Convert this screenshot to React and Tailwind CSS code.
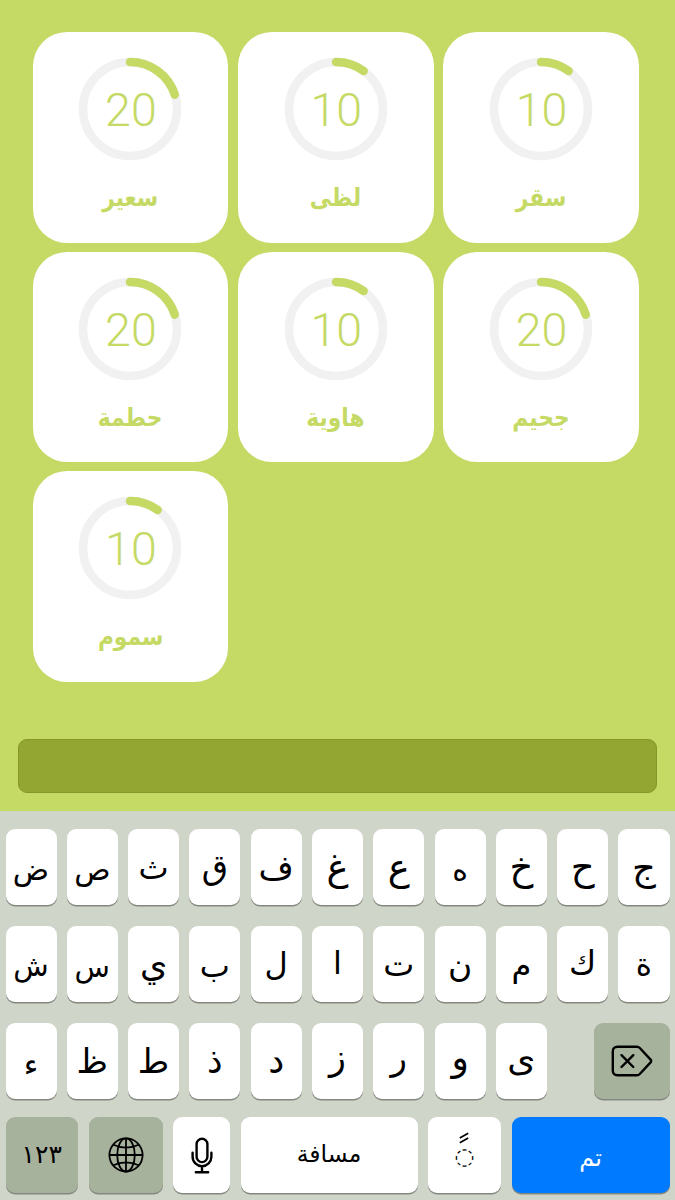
import React from 'react';

const cards = [
  { name: 'سعير', value: 20 },
  { name: 'لظى', value: 10 },
  { name: 'سقر', value: 10 },
  { name: 'حطمة', value: 20 },
  { name: 'هاوية', value: 10 },
  { name: 'جحيم', value: 20 },
  { name: 'سموم', value: 10 },
];

const rows = [
  [
    ['ض', 'text-[30px] pt-1.5'],
    ['ص', 'text-[30px] pt-1.5'],
    ['ث', 'text-[32px] pt-0.5'],
    ['ق', 'text-[34px]'],
    ['ف', 'text-[34px]'],
    ['غ', 'text-[37px]'],
    ['ع', 'text-[37px]'],
    ['ه', 'text-[30px] pt-1.5'],
    ['خ', 'text-[37px]'],
    ['ح', 'text-[37px]'],
    ['ج', 'text-[37px]'],
  ],
  [
    ['ش', 'text-[29px] pt-1'],
    ['س', 'text-[29px] pt-1.5'],
    ['ي', 'text-[35px]'],
    ['ب', 'text-[32px] pt-1'],
    ['ل', 'text-[32px]'],
    ['ا', 'text-[32px] pb-0.5'],
    ['ت', 'text-[33px]'],
    ['ن', 'text-[33px] pt-0.5'],
    ['م', 'text-[32px] pt-0.5'],
    ['ك', 'text-[33px] pb-1'],
    ['ة', 'text-[31px]'],
  ],
  [
    ['ء', 'text-[31px] pt-1.5'],
    ['ظ', 'text-[34px]'],
    ['ط', 'text-[34px]'],
    ['ذ', 'text-[35px]'],
    ['د', 'text-[36px]'],
    ['ز', 'text-[35px] pb-2'],
    ['ر', 'text-[34px] pb-1.5'],
    ['و', 'text-[36px] pb-1.5'],
    ['ى', 'text-[36px] pb-1'],
  ],
];

const RADIUS = 47;
const CIRCUMFERENCE = 2 * Math.PI * RADIUS;

const Card = ({ name, value }) => (
  <div className="h-[210.5px] rounded-[34px] bg-white flex flex-col items-center pt-[25px]">
    <div className="grid place-items-center">
      <svg viewBox="0 0 104 104" className="w-[104px] h-[104px] col-start-1 row-start-1" fill="none">
        <circle cx="52" cy="52" r={RADIUS} stroke="#f1f1f1" strokeWidth="8.5" />
        <circle
          cx="52"
          cy="52"
          r={RADIUS}
          stroke="#c5d965"
          strokeWidth="8.5"
          strokeLinecap="round"
          strokeDasharray={`${(CIRCUMFERENCE * value) / 100} ${CIRCUMFERENCE}`}
          transform="rotate(-90 52 52)"
        />
      </svg>
      <span className="col-start-1 row-start-1 font-['Roboto',sans-serif] font-light text-[46.5px] leading-none text-[#c5d965] pt-[3px] pl-px">
        {value}
      </span>
    </div>
    <p dir="rtl" className="mt-[19px] font-['DejaVu_Sans',sans-serif] font-bold text-[25px] leading-9 text-[#c5d965] scale-x-[0.87]">
      {name}
    </p>
  </div>
);

const Key = ({ children, className = 'bg-white text-black' }) => (
  <div className={`h-[76px] rounded-[9px] shadow-[0_1.5px_0_#85887f] flex items-center justify-center ${className}`}>
    {children}
  </div>
);

const BackspaceIcon = () => (
  <svg viewBox="0 0 42 32" className="w-[42px] h-8" fill="none" stroke="currentColor" strokeWidth="2.4" strokeLinejoin="round" strokeLinecap="round">
    <path d="M6.5 1.8H26Q27.6 1.8 28.8 3L39.6 14.6Q40.7 16 39.6 17.4L28.8 29Q27.6 30.2 26 30.2H6.5Q1.8 30.2 1.8 25.5V6.5Q1.8 1.8 6.5 1.8Z" />
    <path d="M10.5 10.2L22.3 22M22.3 10.2L10.5 22" />
  </svg>
);

const GlobeIcon = () => (
  <svg viewBox="0 0 36 36" className="w-9 h-9" fill="none" stroke="currentColor" strokeWidth="1.8">
    <circle cx="18" cy="18" r="16.6" />
    <ellipse cx="18" cy="18" rx="8.8" ry="16.6" />
    <path d="M18 1.2V34.8M1.2 18H34.8M5.2 7.8Q18 13.5 30.8 7.8M5.2 28.2Q18 22.5 30.8 28.2" />
  </svg>
);

const MicIcon = () => (
  <svg viewBox="0 0 22 37" className="w-[22px] h-[37px] mt-0.5" fill="none" stroke="currentColor" strokeWidth="2.4" strokeLinecap="round">
    <rect x="5.6" y="1.7" width="10.8" height="23.4" rx="5.4" />
    <path d="M1.6 15.8V19.8A9.4 9.4 0 0 0 20.4 19.8V15.8M11 29.4V35.3M4.8 35.3H17.2" />
  </svg>
);

const Keyboard = () => (
  <div className="h-[389px] bg-[#cfd5c9] px-[5.5px] pt-[18px] font-['DejaVu_Sans',sans-serif]">
    <div className="flex flex-col gap-[21.2px]">
      {rows.map((row, i) => (
        <div key={i} className="grid grid-cols-11 gap-x-[10.3px]">
          {row.map(([letter, size]) => (
            <Key key={letter}>
              <span className={`leading-none ${size}`}>{letter}</span>
            </Key>
          ))}
          {i === 2 && (
            <div className="col-span-2 flex justify-end">
              <Key className="w-[75.5px] bg-[#a7b29c] text-black">
                <BackspaceIcon />
              </Key>
            </div>
          )}
        </div>
      ))}
    </div>
    <div className="mt-[17.6px] grid grid-cols-[72.5px_74px_57px_177px_73px_158px] justify-between">
      <Key className="bg-[#a7b29c] text-black">
        <span className="text-[25px]">١٢٣</span>
      </Key>
      <Key className="bg-[#a7b29c] text-black">
        <GlobeIcon />
      </Key>
      <Key>
        <MicIcon />
      </Key>
      <Key>
        <span className="text-[23.5px]">مسافة</span>
      </Key>
      <Key>
        <div className="flex flex-col items-center pb-[10px]">
          <svg viewBox="0 0 10 12" className="w-2.5 h-3" stroke="currentColor" strokeWidth="1.7">
            <path d="M0.8 6L9.2 1.2M0.8 10.8L9.2 6" />
          </svg>
          <span className="text-[23px] leading-6">◌</span>
        </div>
      </Key>
      <Key className="bg-[#007aff] text-white">
        <span className="text-[24px] pt-1.5">تم</span>
      </Key>
    </div>
  </div>
);

export default function App() {
  return (
    <div className="w-[675px] h-[1200px] overflow-hidden bg-[#c5d965] flex flex-col">
      <div className="h-[739px] pl-[32.5px] pr-[36px] pt-[32px]">
        <div className="grid grid-cols-3 gap-x-[9.5px] gap-y-[9px]">
          {cards.map((card) => (
            <Card key={card.name} {...card} />
          ))}
        </div>
      </div>
      <div className="mx-[18px] h-[54px] mb-[18px] shrink-0 rounded-[9px] border border-[#849529] bg-[#93a632]" />
      <Keyboard />
    </div>
  );
}
